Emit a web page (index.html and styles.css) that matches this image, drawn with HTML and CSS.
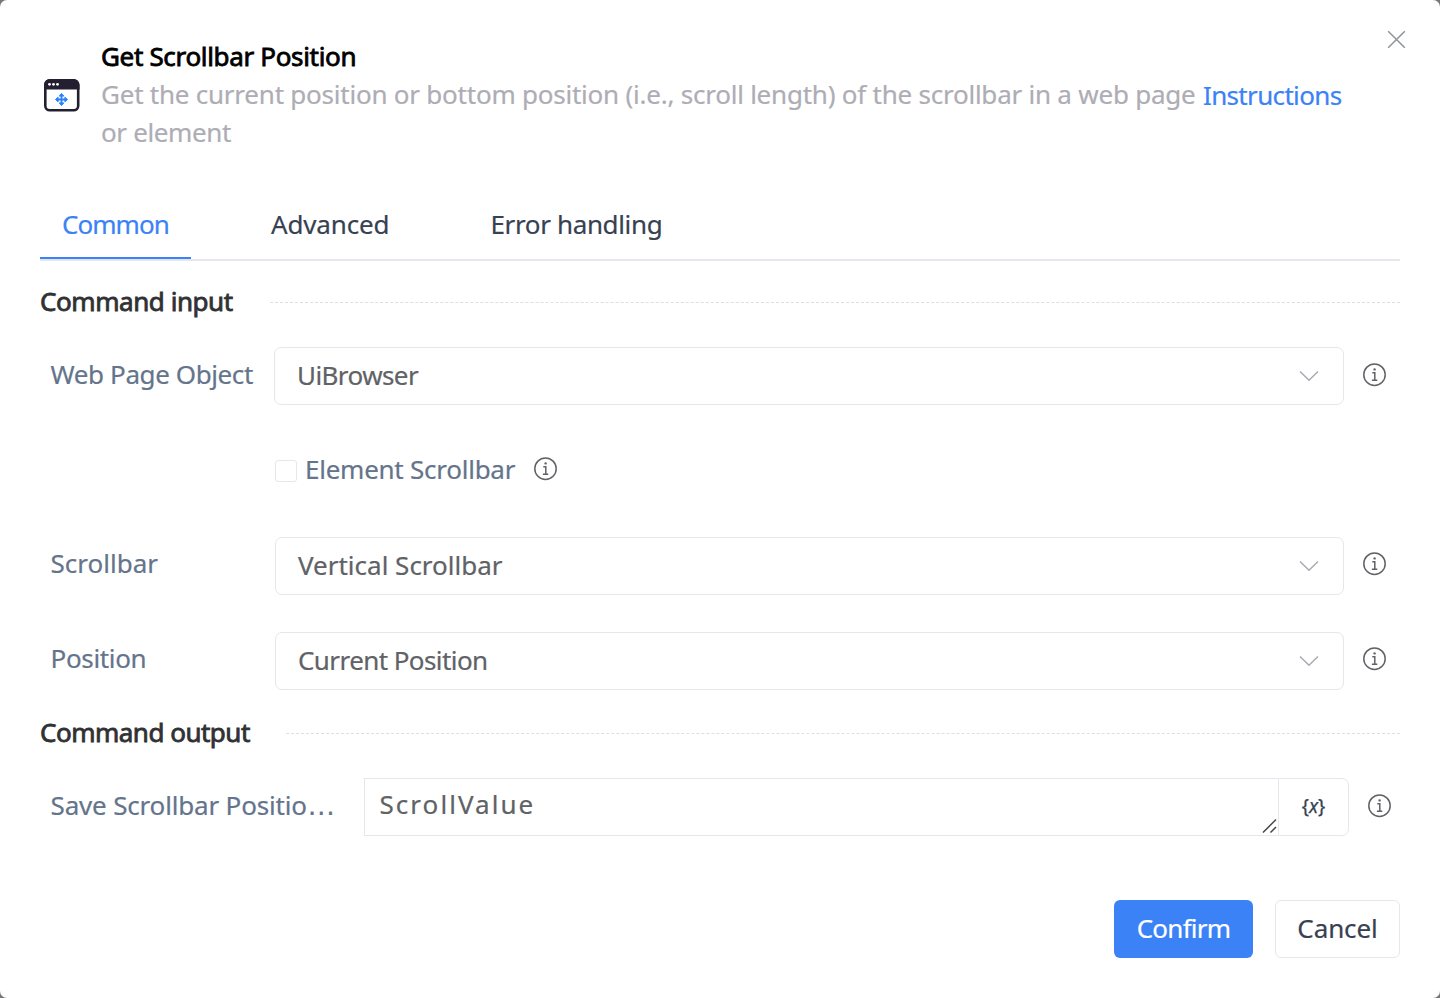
FILE: index.html
```html
<!DOCTYPE html>
<html lang="en">
<head>
<meta charset="utf-8">
<title>Get Scrollbar Position</title>
<link rel="stylesheet" href="styles.css">
</head>
<body>
<svg class="defs" width="0" height="0">
  <symbol id="info" viewBox="0 0 24 24"><circle cx="11.500" cy="11.700" r="10.700" fill="none" stroke="currentColor" stroke-width="1.500"/><circle cx="11.600" cy="6.400" r="1.200" fill="currentColor"/><path d="M9.300 9.800h2.500v7.500M8.900 17.300h5.400" fill="none" stroke="currentColor" stroke-width="1.500"/></symbol>
  <symbol id="chevron" viewBox="0 0 20 12"><path d="M1 1.500l9 8.800 9-8.800" fill="none" stroke="currentColor" stroke-width="1.500"/></symbol>
</svg>
<main class="dialog">
  <button class="close" aria-label="Close"><svg width="19" height="19" viewBox="0 0 19 19"><path d="M1.200 1.200l16.600 16.600M17.800 1.200L1.200 17.800" stroke="currentColor" stroke-width="1.500"/></svg></button>
  <header class="header">
    <svg class="app-icon" width="36" height="34" viewBox="0 .5 36 34">
      <rect x="1.300" y="1.800" width="32.900" height="30" rx="4.500" fill="#fff" stroke="#231f30" stroke-width="2.600"/>
      <path d="M0 11V6.500a6 6 0 0 1 6-6h23.500a6 6 0 0 1 6 6V11z" fill="#231f30"/>
      <g fill="#fff"><circle cx="5.500" cy="5.800" r="1.400"/><circle cx="9.500" cy="5.800" r="1.400"/><circle cx="13.500" cy="5.800" r="1.400"/></g>
      <g stroke="#2b80ff" fill="#2b80ff"><path d="M17.500 16v10M12.500 21h10" stroke-width="1.800"/><path d="M17.500 15l-2.300 2.600h4.600zM17.500 27l-2.300-2.600h4.600zM11.500 21l2.600-2.300v4.600zM23.500 21l-2.600-2.300v4.600z" stroke-width="1" stroke-linejoin="round"/></g>
    </svg>
    <div class="heading">
      <h1 class="title">Get Scrollbar Position</h1>
      <div class="summary"><p class="desc">Get the current position or bottom position (i.e., scroll length) of the scrollbar in a web page<br><span class="tight-s">or element</span></p><a class="link">Instructions</a></div>
    </div>
  </header>
  <nav class="tabs"><a class="tab active">Common</a><a class="tab advanced">Advanced</a><a class="tab tight-s">Error handling</a></nav>
  <h2 class="section input-section">Command input</h2>
  <div class="row first"><label class="label tight-m">Web Page Object</label><div class="select wide"><span class="tight-l">UiBrowser</span><svg class="chevron"><use href="#chevron"/></svg></div><svg class="info"><use href="#info"/></svg></div>
  <div class="row check-row"><i class="checkbox"></i><label class="check-label">Element Scrollbar</label><svg class="info"><use href="#info"/></svg></div>
  <div class="row"><label class="label">Scrollbar</label><div class="select"><span>Vertical Scrollbar</span><svg class="chevron"><use href="#chevron"/></svg></div><svg class="info"><use href="#info"/></svg></div>
  <div class="row"><label class="label tight-s">Position</label><div class="select"><span class="tight-l">Current Position</span><svg class="chevron"><use href="#chevron"/></svg></div><svg class="info"><use href="#info"/></svg></div>
  <h2 class="section output-section">Command output</h2>
  <div class="row output-row"><label class="label">Save Scrollbar Positio<span class="dots">…</span></label><div class="field">ScrollValue<svg class="grip" width="16" height="16" viewBox="0 0 16 16"><path d="M1 14.500L14 1.500M8.500 14.500L14 9" stroke="#444" stroke-width="1.500"/></svg></div><button class="variable">{<i>x</i>}</button><svg class="info"><use href="#info"/></svg></div>
  <footer class="footer"><button class="btn primary">Confirm</button><button class="btn">Cancel</button></footer>
</main>
</body>
</html>
```
FILE: styles.css
```css
* { box-sizing: border-box; }
body { margin: 0; background: #777; font: 26px/38px "Noto Sans", "Open Sans", sans-serif; color: #374151; -webkit-text-stroke: .2px; }
.defs { position: absolute; }
h1, h2, p { margin: 0; font-size: inherit; font-weight: 400; }
button { font: inherit; color: inherit; background: #fff; padding: 0; -webkit-text-stroke: .2px; }
.tight-s { letter-spacing: -.36px; }
.tight-m { letter-spacing: -.4px; }
.tight-l { letter-spacing: -.58px; }
.dialog { position: relative; width: 1440px; height: 998px; padding: 37px 40px 0; background: #fff; border-radius: 7px; }
.close { position: absolute; right: 34px; top: 30px; border: 0; width: 19px; height: 19px; display: flex; color: #909399; }
.header { display: flex; align-items: flex-start; height: 115px; padding-left: 4px; }
.app-icon { margin: 42px 21px 0 0; }
.title { color: #000; -webkit-text-stroke: .8px #000; height: 38px; letter-spacing: -.33px; }
.summary { display: flex; gap: 8px; color: #aeadb5; white-space: nowrap; }
.desc { width: 1094px; letter-spacing: -.23px; }
.link { color: #3b82f6; padding-top: 1px; letter-spacing: -.66px; }
.tabs { display: flex; height: 71px; margin-top: 38px; border-bottom: 2px solid #e4e7ed; }
.tab { height: 69px; padding-top: 15px; white-space: nowrap; }
.active { width: 151px; padding-left: 22px; color: #3b82f6; border-bottom: 2px solid #3b82f6; letter-spacing: -.95px; }
.advanced { margin-left: 80px; width: 219.500px; letter-spacing: -.15px; }
.section { display: flex; align-items: center; gap: 37px; height: 38px; margin: 22px 0 26px; padding-bottom: 2px; color: #303133; -webkit-text-stroke: .8px #303133; white-space: nowrap; letter-spacing: -.44px; }
.section::after { content: ""; flex: 1; border-top: 1px dashed #dcdfe6; position: relative; top: 1px; }
.row { display: flex; height: 58px; margin-bottom: 37px; align-items: center; white-space: nowrap; }
.label { width: 235px; padding: 0 0 6px 10.600px; color: #64748b; }
.first .label { padding-bottom: 4px; }
.select { flex: none; width: 1069px; height: 58px; border: 1px solid #e4e7ed; border-radius: 7px; padding: 0 24px 0 22px; display: flex; align-items: center; justify-content: space-between; color: #606266; }
.select span { padding-bottom: 2px; }
.wide { width: 1070px; margin-left: -1px; }
.chevron { width: 20px; height: 12px; color: #a8abb2; }
.info { width: 24px; height: 24px; margin: -4px 0 0 19px; color: #606266; flex: none; }
.first .info, .output-row .info { margin-top: -2px; }
.check-row { padding-left: 235px; }
.checkbox { width: 22px; height: 22px; border: 1px solid #e4e7ed; border-radius: 3px; margin-right: 8px; }
.check-label { width: 210px; color: #64748b; padding-bottom: 4px; letter-spacing: -.25px; }
.output-section { margin: -13px 0 26px; gap: 36px; letter-spacing: -.5px; }
.output-row { margin-bottom: 64px; }
.output-row .label { width: 324px; padding-bottom: 4px; letter-spacing: -.18px; }
.dots { font: 29px/20px "Liberation Sans", sans-serif; }
.field { position: relative; width: 914px; height: 58px; border: 1px solid #e4e7ed; border-right: 0; padding: 6px 14.500px; color: #606266; letter-spacing: 2.050px; }
.grip { position: absolute; right: 0; bottom: 1px; }
.variable { width: 71px; height: 58px; border: 1px solid #e4e7ed; border-radius: 0 7px 7px 0; font-size: 19px; padding-bottom: 2px; -webkit-text-stroke: .25px; }
.footer { display: flex; justify-content: flex-end; gap: 22px; }
.btn { height: 58px; width: 125px; border: 1px solid #e4e7ed; border-radius: 6px; padding-bottom: 2px; letter-spacing: -.1px; }
.primary { width: 139px; background: #3b82f6; border: 0; color: #fff; letter-spacing: -.75px; }
```
